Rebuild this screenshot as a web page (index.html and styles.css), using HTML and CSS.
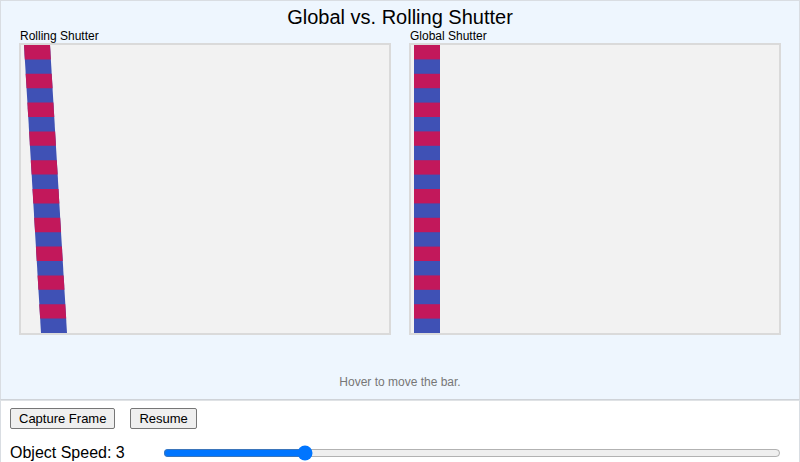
FILE: index.html
```html
<!DOCTYPE html>
<html lang="en">
<head>
<meta charset="utf-8">
<title>Global vs. Rolling Shutter</title>
<link rel="stylesheet" href="styles.css">
</head>
<body>
<div class="app">
  <section class="stage">
    <h1 class="title">Global vs. Rolling Shutter</h1>
    <div class="views">
      <div class="view">
        <div class="view-label">Rolling Shutter</div>
        <div class="canvas">
          <svg class="canvas-svg" viewBox="0 0 368 288" width="368" height="288">
            <g transform="matrix(1,0,0.05903,1,3,0)">
              <rect x="0" y="0" width="26" height="288" fill="#3f51b5"/>
              <rect x="0" y="0" width="26" height="14.4" fill="#c2185b"/>
              <rect x="0" y="28.8" width="26" height="14.4" fill="#c2185b"/>
              <rect x="0" y="57.6" width="26" height="14.4" fill="#c2185b"/>
              <rect x="0" y="86.4" width="26" height="14.4" fill="#c2185b"/>
              <rect x="0" y="115.2" width="26" height="14.4" fill="#c2185b"/>
              <rect x="0" y="144" width="26" height="14.4" fill="#c2185b"/>
              <rect x="0" y="172.8" width="26" height="14.4" fill="#c2185b"/>
              <rect x="0" y="201.6" width="26" height="14.4" fill="#c2185b"/>
              <rect x="0" y="230.4" width="26" height="14.4" fill="#c2185b"/>
              <rect x="0" y="259.2" width="26" height="14.4" fill="#c2185b"/>
            </g>
          </svg>
        </div>
      </div>
      <div class="view">
        <div class="view-label">Global Shutter</div>
        <div class="canvas">
          <svg class="canvas-svg" viewBox="0 0 368 288" width="368" height="288">
            <g transform="translate(3,0)">
              <rect x="0" y="0" width="26" height="288" fill="#3f51b5"/>
              <rect x="0" y="0" width="26" height="14.4" fill="#c2185b"/>
              <rect x="0" y="28.8" width="26" height="14.4" fill="#c2185b"/>
              <rect x="0" y="57.6" width="26" height="14.4" fill="#c2185b"/>
              <rect x="0" y="86.4" width="26" height="14.4" fill="#c2185b"/>
              <rect x="0" y="115.2" width="26" height="14.4" fill="#c2185b"/>
              <rect x="0" y="144" width="26" height="14.4" fill="#c2185b"/>
              <rect x="0" y="172.8" width="26" height="14.4" fill="#c2185b"/>
              <rect x="0" y="201.6" width="26" height="14.4" fill="#c2185b"/>
              <rect x="0" y="230.4" width="26" height="14.4" fill="#c2185b"/>
              <rect x="0" y="259.2" width="26" height="14.4" fill="#c2185b"/>
            </g>
          </svg>
        </div>
      </div>
    </div>
    <p class="hint">Hover to move the bar.</p>
  </section>
  <section class="controls">
    <div class="buttons">
      <button class="btn" type="button">Capture Frame</button>
      <button class="btn" type="button">Resume</button>
    </div>
    <div class="speed-row">
      <label class="speed-label" for="speed">Object Speed: 3</label>
      <input class="speed-slider" id="speed" type="range" min="1" max="10" value="3">
    </div>
  </section>
</div>
</body>
</html>
```

FILE: styles.css
```css
html, body {
  margin: 0;
  padding: 0;
  background: #ffffff;
}

body {
  font-family: "Liberation Sans", Arial, sans-serif;
  color: #000;
  width: 800px;
  height: 462px;
  overflow: hidden;
}

.app {
  display: flex;
  flex-direction: column;
}

.stage {
  background: #eef6fe;
  border: 1px solid #d9dde2;
  border-bottom-color: #cfd3d8;
  padding: 4px 18px 9px 18px;
  height: 385px;
  box-sizing: content-box;
}

.title {
  margin: 0;
  font-size: 20px;
  line-height: 24px;
  font-weight: normal;
  text-align: center;
}

.views {
  display: grid;
  grid-template-columns: 372px 372px;
  column-gap: 18px;
}

.view-label {
  font-size: 12px;
  line-height: 14px;
  padding-left: 1px;
}

.canvas {
  width: 368px;
  height: 288px;
  border: 2px solid #dadada;
  background: #f2f2f2;
  overflow: hidden;
}

.canvas-svg {
  display: block;
}

.hint {
  margin: 40px 0 0 0;
  font-size: 12px;
  line-height: 14px;
  color: #777777;
  text-align: center;
}

.controls {
  border: 1px solid #d9dde2;
  border-top: 1px solid #dfe2e5;
  padding: 7px 18px 0 9px;
  height: 60px;
}

.buttons {
  display: flex;
  gap: 15px;
}

.btn {
  font-family: "Liberation Sans", Arial, sans-serif;
  font-size: 13px;
  line-height: 15px;
  padding: 2px 8px;
  margin: 0;
  background: #efefef;
  border: 1px solid #767676;
  border-radius: 2px;
  color: #000;
}

.speed-row {
  display: flex;
  align-items: center;
  margin-top: 15px;
}

.speed-label {
  font-size: 16px;
  line-height: 18px;
  width: 151px;
  flex: none;
}

.speed-slider {
  flex: 1;
  margin: 0 0 0 2px;
}
```
